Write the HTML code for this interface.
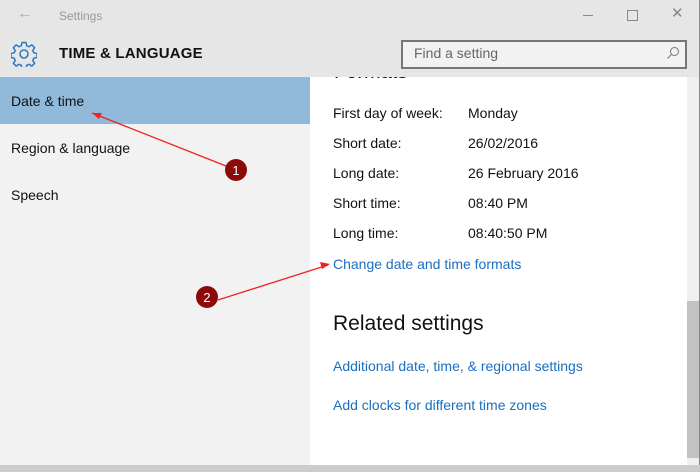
<!DOCTYPE html>
<html><head><style>
body{margin:0;width:700px;height:472px;overflow:hidden;font-family:"Liberation Sans",sans-serif;position:relative;background:#f2f2f2}
.a{position:absolute;white-space:nowrap}
</style></head><body>
<div class="a" style="left:0;top:0;width:700px;height:77px;background:#e6e6e6"></div>
<div class="a" style="left:17px;top:5px;color:#aaa;font-size:16px">&#8592;</div>
<div class="a" style="left:59px;top:9px;color:#999;font-size:12px">Settings</div>
<div class="a" style="left:583px;top:15px;width:10px;border-top:1px solid #888"></div>
<div class="a" style="left:627px;top:10px;width:9px;height:9px;border:1px solid #888"></div>
<div class="a" style="left:671px;top:4px;color:#888;font-size:15px">✕</div>
<svg class="a" style="left:11px;top:41px" width="26" height="26" viewBox="0 0 26 26"><g fill="none" stroke="#2b78c2" stroke-width="1.5" stroke-linejoin="round"><circle cx="13" cy="13" r="4"/><path d="M11 1.5h4l.7 3.2 2.3 1 2.8-1.8 2.8 2.8-1.8 2.8 1 2.3 3.2.7v4l-3.2.7-1 2.3 1.8 2.8-2.8 2.8-2.8-1.8-2.3 1-.7 3.2h-4l-.7-3.2-2.3-1-2.8 1.8-2.8-2.8 1.8-2.8-1-2.3-3.2-.7v-4l3.2-.7 1-2.3-1.8-2.8 2.8-2.8 2.8 1.8 2.3-1z"/></g></svg>
<div class="a" style="left:59px;top:45px;font-size:15px;font-weight:bold;color:#111;letter-spacing:.2px">TIME &amp; LANGUAGE</div>
<div class="a" style="left:401px;top:40px;width:282px;height:25px;border:2px solid #777;background:#f2f2f2"></div>
<div class="a" style="left:414px;top:45px;font-size:14px;color:#666">Find a setting</div>
<svg class="a" style="left:666px;top:46px" width="14" height="14"><circle cx="8.5" cy="5.5" r="4" fill="none" stroke="#777"/><path d="M5.5 8.5L1.5 12.5" stroke="#777"/></svg>
<div class="a" style="left:0;top:77px;width:310px;height:47px;background:#91b9d9"></div>
<div class="a" style="left:11px;top:93px;font-size:14px;color:#111">Date &amp; time</div>
<div class="a" style="left:11px;top:140px;font-size:14px;color:#111">Region &amp; language</div>
<div class="a" style="left:11px;top:187px;font-size:14px;color:#111">Speech</div>
<div class="a" style="left:310px;top:77px;width:377px;height:388px;background:#fff;overflow:hidden">
<div class="a" style="left:24px;top:-16px;font-size:20px;color:#111">Formats</div>
</div>
<div class="a" style="left:687px;top:77px;width:12px;height:388px;background:#f0f0f0"></div>
<div class="a" style="left:687px;top:301px;width:12px;height:157px;background:#c2c2c2"></div>
<div class="a" style="left:699px;top:0;width:1px;height:472px;background:#888"></div>
<div class="a" style="left:0;top:465px;width:700px;height:7px;background:#ccc"></div>
<div style="font-size:14px;color:#111">
<div class="a" style="left:333px;top:105px">First day of week:</div><div class="a" style="left:468px;top:105px">Monday</div>
<div class="a" style="left:333px;top:135px">Short date:</div><div class="a" style="left:468px;top:135px">26/02/2016</div>
<div class="a" style="left:333px;top:165px">Long date:</div><div class="a" style="left:468px;top:165px">26 February 2016</div>
<div class="a" style="left:333px;top:195px">Short time:</div><div class="a" style="left:468px;top:195px">08:40 PM</div>
<div class="a" style="left:333px;top:225px">Long time:</div><div class="a" style="left:468px;top:225px">08:40:50 PM</div>
</div>
<div class="a" style="left:333px;top:256px;font-size:14px;color:#1a6fc0">Change date and time formats</div>
<div class="a" style="left:333px;top:312px;font-size:21px;color:#111">Related settings</div>
<div class="a" style="left:333px;top:358px;font-size:14px;color:#1a6fc0">Additional date, time, &amp; regional settings</div>
<div class="a" style="left:333px;top:397px;font-size:14px;color:#1a6fc0">Add clocks for different time zones</div>
<svg class="a" style="left:0;top:0" width="700" height="472">
<path d="M226 166L92 113" stroke="#e22" stroke-width="1.3"/><path d="M92 113l10 0-3 6z" fill="#e22"/>
<path d="M218 300L328 265" stroke="#e22" stroke-width="1.3"/><path d="M330 264l-10-2 2 7z" fill="#e22"/>
<circle cx="236" cy="170" r="11" fill="#8b0a0a"/><text x="236" y="175" fill="#fff" font-size="13" text-anchor="middle" font-family="Liberation Sans">1</text>
<circle cx="207" cy="297" r="11" fill="#8b0a0a"/><text x="207" y="302" fill="#fff" font-size="13" text-anchor="middle" font-family="Liberation Sans">2</text>
</svg>
</body></html>
